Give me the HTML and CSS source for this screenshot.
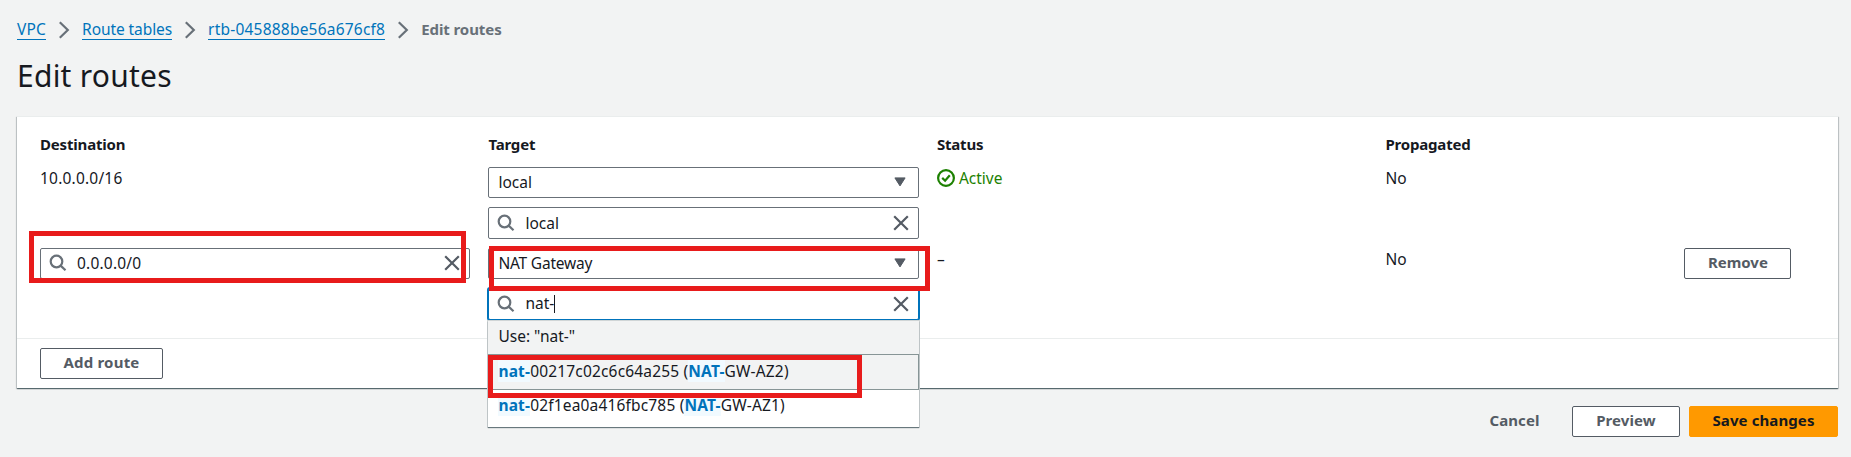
FILE: index.html
```html
<!DOCTYPE html>
<html lang="en">
<head>
<meta charset="utf-8">
<title>Edit routes</title>
<link rel="stylesheet" href="styles.css">
</head>
<body>
<svg class="defs" aria-hidden="true">
  <symbol id="search" viewBox="0 0 18 18"><circle cx="7.5" cy="7.5" r="5.8"/><path d="M11.6 11.6 16.5 16.3"/></symbol>
  <symbol id="close" viewBox="0 0 18 18"><path d="M2.2 2.2 15.8 15.8M15.8 2.2 2.2 15.8"/></symbol>
  <symbol id="chevron" viewBox="0 0 12 18"><path d="M1.8 1.2 9.8 9 1.8 16.8"/></symbol>
  <symbol id="caret" viewBox="0 0 12 10"><path d="M.9 .9H11.1L6 8.9Z"/></symbol>
  <symbol id="check" viewBox="0 0 18 18"><circle cx="9" cy="9" r="7.9"/><path d="M5.2 8.9 8.1 11.7 12.8 6.3"/></symbol>
</svg>
<nav class="crumbs">
  <a class="link vpc">VPC</a>
  <svg class="chev"><use href="#chevron"/></svg>
  <a class="link">Route tables</a>
  <svg class="chev"><use href="#chevron"/></svg>
  <a class="link id">rtb-045888be56a676cf8</a>
  <svg class="chev"><use href="#chevron"/></svg>
  <span class="current">Edit routes</span>
</nav>
<h1>Edit routes</h1>
<main class="card">
  <div class="grid">
    <div class="th">Destination</div><div class="th">Target</div><div class="th">Status</div><div class="th">Propagated</div><div></div>
  </div>
  <div class="grid row">
    <div class="num">10.0.0.0/16</div>
    <div class="stack">
      <div class="field select"><span>local</span><svg class="caret"><use href="#caret"/></svg></div>
      <div class="field search"><svg class="icon"><use href="#search"/></svg><span>local</span><svg class="icon x"><use href="#close"/></svg></div>
    </div>
    <div class="status"><svg class="icon"><use href="#check"/></svg><span>Active</span></div>
    <div>No</div><div></div>
  </div>
  <div class="grid row second">
    <div><div class="field search dest"><svg class="icon"><use href="#search"/></svg><span class="num">0.0.0.0/0</span><svg class="icon x"><use href="#close"/></svg></div></div>
    <div class="stack">
      <div class="field select"><span class="gateway">NAT Gateway</span><svg class="caret"><use href="#caret"/></svg></div>
      <div class="combo">
        <div class="field search focus"><svg class="icon"><use href="#search"/></svg><span class="typed">nat-</span><svg class="icon x"><use href="#close"/></svg></div>
        <div class="menu">
          <div class="opt use">Use: "nat-"</div>
          <div class="opt active"><span><mark>nat-</mark>00217c02c6c64a255 (<mark>NAT-</mark>GW-AZ2)</span></div>
          <div class="opt last"><span><mark>nat-</mark>02f1ea0a416fbc785 (<mark>NAT-</mark>GW-AZ1)</span></div>
        </div>
      </div>
    </div>
    <div>–</div><div>No</div>
    <div><button class="btn remove">Remove</button></div>
  </div>
  <footer class="foot"><button class="btn add">Add route</button></footer>
</main>
<div class="actions">
  <button class="btn plain">Cancel</button>
  <button class="btn preview">Preview</button>
  <button class="btn primary">Save changes</button>
</div>
<div class="note note-dest"></div>
<div class="note note-target"></div>
<div class="note note-option"></div>
</body>
</html>
```
FILE: styles.css
```css
* { box-sizing: border-box; }
body {
  margin: 0;
  height: 457px;
  padding: 18px 13px 0 17px;
  position: relative;
  overflow: hidden;
  background: #f2f3f3;
  color: #16191f;
  font: 15.5px/22px "Noto Sans", "Open Sans", sans-serif;
}
.defs { position: absolute; width: 0; height: 0; }
svg { fill: none; stroke: #687078; stroke-width: 2.2; flex: none; display: block; }
.crumbs { display: flex; height: 22px; white-space: nowrap; }
.link { color: #0073bb; height: 22px; border-bottom: 1px solid #0073bb; letter-spacing: -.08px; }
.link.vpc { letter-spacing: .2px; }
.link.id { letter-spacing: .21px; }
.chev { width: 12px; height: 18px; margin: 3px 12px 0; stroke: #687078; }
.current { color: #687078; font-weight: 700; font-size: 15px; letter-spacing: -.08px; }
h1 { margin: 18px 0 0; height: 58px; font-size: 30px; line-height: 36px; font-weight: 400; letter-spacing: .25px; }
.card {
  height: 272px;
  background: #fff;
  border-top: 1px solid #eaeded;
  padding-top: 16px;
  box-shadow: 0 1px 1px 0 rgba(0, 28, 36, .5), 1px 1px 1px 0 rgba(0, 28, 36, .15), -1px 1px 1px 0 rgba(0, 28, 36, .15);
}
.grid { display: grid; grid-template-columns: 448.4px 448.5px 448.5px 299px 1fr; padding: 0 0 0 23px; }
.row { margin-top: 12px; height: 72px; }
.row.second { margin-top: 9px; height: 90px; }
.th { font-weight: 700; font-size: 15px; letter-spacing: -.18px; }
.num { letter-spacing: .2px; }
.stack { width: 431px; display: flex; flex-direction: column; gap: 9px; }
.field {
  display: flex;
  align-items: center;
  height: 31px;
  border: 1px solid #687078;
  border-radius: 2px;
  background: #fff;
  padding: 0 8px 2px 9px;
}
.field.search { height: 32px; padding: 0 8px 1px; }
.field.dest { width: 430px; height: 31px; }
.caret { width: 12px; height: 10px; margin: 1px 4px 0 auto; fill: #545b64; stroke: #545b64; stroke-width: 1; }
.icon { width: 18px; height: 18px; }
.field .icon { margin-right: 10px; }
.field .x { margin: 0 0 0 auto; stroke: #545b64; }
.status { display: flex; align-items: center; height: 22px; gap: 4px; color: #1d8102; }
.status .icon { stroke: #1d8102; }
.gateway { letter-spacing: -.2px; }
.combo { position: relative; }
.field.focus { border-color: #0073bb; box-shadow: 0 0 0 1px #0073bb; }
.typed { border-right: 1px solid #16191f; height: 18px; line-height: 17px; }
.menu {
  position: absolute;
  left: 0;
  right: 0;
  top: 33px;
  height: 106px;
  background: #fff;
  box-shadow: 0 1px 1px rgba(0, 28, 36, .5), 0 0 0 1px #d0d5d6;
  z-index: 1;
}
.opt { padding: 0 10px; height: 36px; line-height: 32px; letter-spacing: .17px; white-space: nowrap; }
.opt.use { background: #f2f3f3; height: 33px; line-height: 31px; letter-spacing: 0; }
.opt.active { background: #f2f3f3; border: 1px solid #879596; padding: 0 9px; }
.opt.last { line-height: 30px; }
mark { background: #f1faff; color: #0073bb; font-weight: 700; }
.foot { border-top: 1px solid #eaeded; padding: 9px 23px; }
.btn {
  display: block;
  height: 31px;
  padding: 0 0 3px;
  border: 1px solid #545b64;
  border-radius: 2px;
  background: #fff;
  color: #545b64;
  font: 700 15px/26px "Noto Sans", "Open Sans", sans-serif;
}
.remove { width: 107px; }
.add { width: 123px; letter-spacing: .2px; }
.actions { display: flex; justify-content: flex-end; margin-top: 18px; }
.plain { background: none; border-color: transparent; width: 85px; margin-right: 15px; letter-spacing: .1px; }
.preview { width: 108px; margin-right: 9px; letter-spacing: .1px; }
.primary { width: 149px; background: #f90; border-color: #f90; color: #16191f; letter-spacing: .1px; }
.note { position: absolute; border: 5px solid #e81b1b; z-index: 2; }
.note-dest { left: 29px; top: 231px; width: 437px; height: 52px; }
.note-target { left: 489px; top: 246px; width: 441px; height: 45px; }
.note-option { left: 488px; top: 355px; width: 374px; height: 43px; }
```
